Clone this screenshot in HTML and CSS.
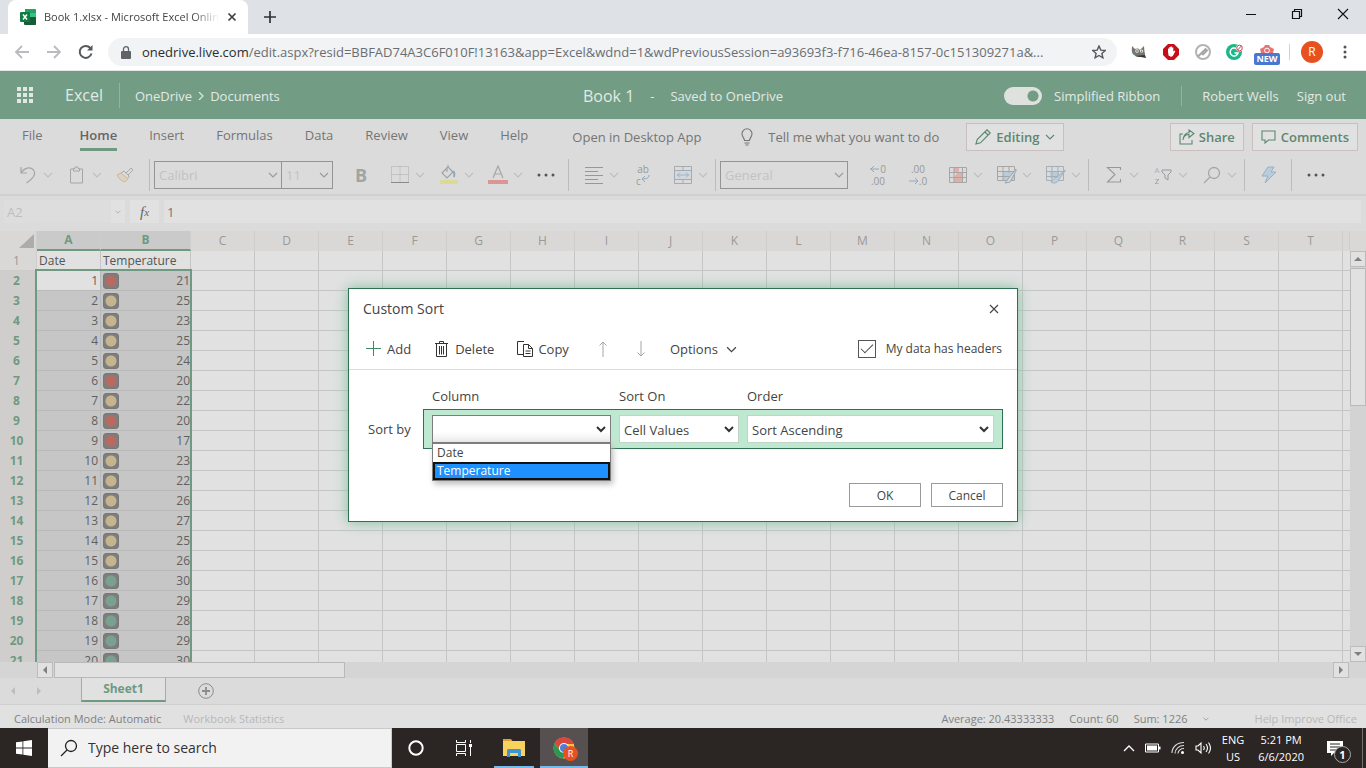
FILE: index.html
```html
<!DOCTYPE html>
<html lang="en">
<head>
<meta charset="utf-8">
<title>Book 1.xlsx - Microsoft Excel Online</title>
<link rel="stylesheet" href="styles.css">
</head>
<body>
<svg class="sprite" aria-hidden="true">
  <symbol id="chev" viewBox="0 0 10 10"><path d="M1 3l4 4 4-4" fill="none" stroke="currentColor" stroke-width="1.1"/></symbol>
  <symbol id="chev-bold" viewBox="0 0 10 10"><path d="M1 3l4 4 4-4" fill="none" stroke="#333" stroke-width="2"/></symbol>
  <symbol id="lens" viewBox="0 0 18 18"><circle cx="11" cy="7" r="5.5" fill="none" stroke="currentColor" stroke-width="1.3"/><path d="M7 11L1 17" stroke="currentColor" stroke-width="1.3"/></symbol>
</svg>

<header class="tabstrip">
  <div class="tab">
    <svg width="16" height="16" viewBox="0 0 16 16"><path d="M5 0h10a1 1 0 0 1 1 1v14a1 1 0 0 1-1 1H5z" fill="#21a366"/><path d="M4 8h12v7a1 1 0 0 1-1 1H5a1 1 0 0 1-1-1z" fill="#185c37"/><path d="M4 4h6v8H4z" fill="#107c41"/><path d="M10 4h6v4h-6z" fill="#33c481"/><rect y="3" width="10" height="10" rx="1" fill="#107c41"/><path d="M3 5.500l4 5M7 5.500l-4 5" stroke="#fff" stroke-width="1.500"/></svg>
    <span class="tab-title">Book 1.xlsx - Microsoft Excel Online</span>
    <button class="plain" aria-label="Close tab"><svg width="10" height="10" viewBox="0 0 10 10"><path d="M1.500 1.500l7 7M8.500 1.500l-7 7" stroke="#3c4043" stroke-width="1.700"/></svg></button>
  </div>
  <button class="plain new-tab" aria-label="New tab"><svg width="12" height="12" viewBox="0 0 12 12"><path d="M6 0v12M0 6h12" stroke="#303336" stroke-width="1.700"/></svg></button>
  <div class="window-controls">
    <button class="plain" aria-label="Minimize"><svg width="12" height="12" viewBox="0 0 12 12"><path d="M1 6.500h10" stroke="#111"/></svg></button>
    <button class="plain" aria-label="Restore"><svg width="12" height="12" viewBox="0 0 12 12"><path d="M1.500 3.500h7v7h-7zM3.500 3.500v-2h7v7h-2" fill="none" stroke="#111" stroke-width="1.200"/></svg></button>
    <button class="plain" aria-label="Close window"><svg width="12" height="12" viewBox="0 0 12 12"><path d="M1 1l10 10M11 1L1 11" stroke="#111" stroke-width="1.100"/></svg></button>
  </div>
</header>

<div class="browser-bar">
  <button class="plain nav" aria-label="Back"><svg width="16" height="14" viewBox="0 0 16 14"><path d="M15 7H2M8 1L2 7l6 6" fill="none" stroke="#b9bbbe" stroke-width="1.800"/></svg></button>
  <button class="plain nav" aria-label="Forward"><svg width="16" height="14" viewBox="0 0 16 14"><path d="M1 7h13M8 1l6 6-6 6" fill="none" stroke="#b9bbbe" stroke-width="1.800"/></svg></button>
  <button class="plain nav" aria-label="Reload"><svg width="16" height="16" viewBox="0 0 16 16"><path d="M13.500 9.500A6 6 0 1 1 12.300 4" fill="none" stroke="#55585c" stroke-width="2"/><path d="M14.500 1v5.500H9z" fill="#55585c"/></svg></button>
  <div class="address">
    <svg width="10" height="13" viewBox="0 0 10 13"><rect y="5" width="10" height="8" rx="1" fill="#5f6368"/><path d="M2.500 5V3.200a2.500 2.500 0 0 1 5 0V5" fill="none" stroke="#5f6368" stroke-width="1.300"/></svg>
    <span class="url"><b>onedrive.live.com</b>/edit.aspx?resid=BBFAD74A3C6F010F!13163&amp;app=Excel&amp;wdnd=1&amp;wdPreviousSession=a93693f3-f716-46ea-8157-0c151309271a&amp;...</span>
    <button class="plain" aria-label="Bookmark"><svg width="14" height="14" viewBox="0 0 14 14"><path d="M7 1l1.800 4.100 4.400.4-3.300 2.900 1 4.400L7 10.500l-3.900 2.300 1-4.400L.8 5.500l4.400-.4z" fill="none" stroke="#55585c" stroke-width="1.400"/></svg></button>
  </div>
  <div class="extensions">
    <button class="plain ext" aria-label="Extension"><svg width="16" height="14" viewBox="0 0 16 14"><path d="M1 1l3 3c2-1 4-.5 5 1l4-4 .5 6c1 2 .5 3.500-.5 4-3 2-8 1-10-1C0 8 1 4 1 1z" fill="#77756f"/><circle cx="6" cy="6" r="1.700" fill="#fff"/><circle cx="10.500" cy="6" r="1.500" fill="#fff"/><circle cx="6" cy="6" r=".7"/><circle cx="10.500" cy="6" r=".6"/><path d="M4 11l10-1 1 3-5-1z" fill="#333"/><path d="M2 8l2 1-1 1z" fill="#48a6c8"/></svg></button>
    <button class="plain ext" aria-label="Ad blocker"><svg width="16" height="16" viewBox="0 0 16 16"><path d="M5 0h6l5 5v6l-5 5H5l-5-5V5z" fill="#c70d17"/><path d="M5 8V4.500h1.300V3h1.400V2.500h1.300V3.500h1.300v4l1.500-1 .5.800L9.800 12c-1 1-3.500 1-4.200-.5z" fill="#fff"/></svg></button>
    <button class="plain ext" aria-label="Link extension"><svg width="16" height="16" viewBox="0 0 16 16"><circle cx="8" cy="8" r="7" fill="none" stroke="#b3b3b3" stroke-width="2"/><path d="M3 12.500L10.500 5l1.500 1.500L8 10.500 6.500 9" stroke="#a5a5a5" stroke-width="1.900" fill="none"/></svg></button>
    <button class="plain ext" aria-label="Grammar extension"><svg width="18" height="16" viewBox="0 0 18 16"><circle cx="8" cy="8" r="8" fill="#18b888"/><path d="M10.500 4.800A4 4 0 1 0 12 9H8.500" fill="none" stroke="#fff" stroke-width="1.500"/><circle cx="13.500" cy="4" r="3.600" fill="#fff"/><circle cx="13.500" cy="4" r="2.800" fill="none" stroke="#c8485c"/><path d="M11.600 6l3.800-4" stroke="#c8485c"/></svg></button>
    <button class="plain ext stacked" aria-label="New extension"><svg width="16" height="8" viewBox="0 0 16 8"><path d="M1 4L5 2l1-2h4l1 2 4 2-1 4H2z" fill="#e57373"/><circle cx="8" cy="5.500" r="2.400" fill="none" stroke="#fff"/></svg><span class="new-badge">NEW</span></button>
    <span class="bar-line"></span>
    <button class="avatar" aria-label="Profile">R</button>
    <button class="plain menu-dots" aria-label="Menu"><svg width="4" height="14" viewBox="0 0 4 14" fill="#4f5256"><circle cx="2" cy="2" r="1.500"/><circle cx="2" cy="7" r="1.500"/><circle cx="2" cy="12" r="1.500"/></svg></button>
  </div>
</div>

<main class="app">
  <div class="suite">
    <button class="plain waffle" aria-label="App launcher"><svg width="16" height="16" viewBox="0 0 16 16" fill="#dfe8e2"><path d="M0 0h4v4H0zM6 0h4v4H6zM12 0h4v4h-4zM0 6h4v4H0zM6 6h4v4H6zM12 6h4v4h-4zM0 12h4v4H0zM6 12h4v4H6zM12 12h4v4h-4z"/></svg></button>
    <a class="brand" href="#">Excel</a>
    <nav class="crumbs"><a href="#">OneDrive</a><svg width="6" height="8" viewBox="0 0 6 8"><path d="M1 0l4 4-4 4" fill="none" stroke="#dfe8e2" stroke-width="1.200"/></svg><a href="#">Documents</a></nav>
    <div class="doc"><h1>Book 1</h1><span>-</span><span>Saved to OneDrive</span></div>
    <div class="account">
      <label class="simplified"><input type="checkbox" class="switch" checked>Simplified Ribbon</label>
      <a class="user" href="#">Robert Wells</a>
      <a href="#">Sign out</a>
    </div>
  </div>

  <div class="ribbon-tabs">
    <nav class="tabs">
      <a href="#" class="file">File</a><a href="#" class="active">Home</a><a href="#">Insert</a><a href="#">Formulas</a><a href="#">Data</a><a href="#">Review</a><a href="#">View</a><a href="#">Help</a>
    </nav>
    <a class="desktop" href="#">Open in Desktop App</a>
    <button class="plain tell"><svg width="12" height="18" viewBox="0 0 12 18"><path d="M3.500 12.500C3.500 10 1 9 1 5.800a5 5 0 0 1 10 0C11 9 8.500 10 8.500 12.500zM3.500 15h5M4.500 17h3" fill="none" stroke="#747474" stroke-width="1.100"/></svg>Tell me what you want to do</button>
    <button class="boxed editing"><svg width="16" height="16" viewBox="0 0 16 16"><path d="M1 15l1.200-4.500L12 .8l3.200 3.200-9.700 9.800zM10 3l3 3" fill="none" stroke="#5c8870" stroke-width="1.200"/></svg>Editing<svg width="10" height="10"><use href="#chev"/></svg></button>
    <div class="right-actions">
      <button class="boxed"><svg width="16" height="16" viewBox="0 0 16 16"><path d="M4 5H1v10h12v-4M4 11c.5-4 3-5.500 6-5.500V8.500L15 4.500 10 1v2.800C6 4 4.500 7 4 11z" fill="none" stroke="#5c8870" stroke-width="1.100"/></svg>Share</button>
      <button class="boxed"><svg width="16" height="14" viewBox="0 0 16 14"><path d="M1 1h13v9H7.500L4 13v-3H1z" fill="none" stroke="#5c8870" stroke-width="1.100"/></svg>Comments</button>
    </div>
  </div>

  <div class="tools">
    <div class="group first">
      <button class="tool split" aria-label="Undo"><span><svg width="18" height="20" viewBox="0 0 18 20"><path d="M2 2v6h6M2 8C5 3 11 1 14.500 5c3 4-.5 9-7 13" fill="none" stroke="#999" stroke-width="1.200"/></svg></span><svg width="10" height="10"><use href="#chev"/></svg></button>
      <button class="tool split" aria-label="Paste"><span><svg width="16" height="18" viewBox="0 0 16 18"><path d="M4.500 3H1.500v14h12V3h-3M4.500 5V2.500h1.500V1h3v1.500h1.500V5z" fill="none" stroke="#999"/></svg></span><svg width="10" height="10"><use href="#chev"/></svg></button>
      <button class="tool" aria-label="Format painter"><svg width="18" height="16" viewBox="0 0 18 16"><path d="M1 8l4-2 7 6-3 3c-3-.5-6-3-8-7z" fill="#ddd2bd" stroke="#cdb994"/><path d="M5 6l3-2 5 5-1 2M10 6l5-5 2 2-5 5" fill="none" stroke="#aaa"/></svg></button>
    </div>
    <div class="group flush">
      <div class="combo font"><select aria-label="Font"><option>Calibri</option></select><svg width="10" height="10"><use href="#chev"/></svg></div>
      <div class="combo size"><select aria-label="Font size"><option>11</option></select><svg width="10" height="10"><use href="#chev"/></svg></div>
      <button class="tool bold">B</button>
      <button class="tool split" aria-label="Borders"><span><svg width="18" height="18" viewBox="0 0 18 18"><path d="M.5 .5h17v16H.5zM9 .5v16M.5 8.500h17" fill="none" stroke="#a0a0a0" stroke-dasharray="1 1"/><path d="M0 16.500h18" stroke="#777"/></svg></span><svg width="10" height="10"><use href="#chev"/></svg></button>
      <button class="tool split" aria-label="Fill color"><span><svg width="20" height="20" viewBox="0 0 20 20"><path d="M9 2L3 8l5 5 6-6-5-5V0M8 2v5" fill="none" stroke="#8b959c" stroke-width="1.100"/><path d="M13 7c2-1 3 1 2 5" fill="none" stroke="#7f9bb0" stroke-width="2"/><path d="M1 15h18v4H1z" fill="#dbdb85"/></svg></span><svg width="10" height="10"><use href="#chev"/></svg></button>
      <button class="tool split" aria-label="Font color"><span><svg width="20" height="20" viewBox="0 0 20 20"><path d="M5 13L10 1l5 12M7 9h6" fill="none" stroke="#999" stroke-width="1.200"/><path d="M0 15h20v4H0z" fill="#db8583"/></svg></span><svg width="10" height="10"><use href="#chev"/></svg></button>
      <button class="tool" aria-label="More font options"><svg width="18" height="4" viewBox="0 0 18 4" fill="#555"><circle cx="2" cy="2" r="1.500"/><circle cx="9" cy="2" r="1.500"/><circle cx="16" cy="2" r="1.500"/></svg></button>
    </div>
    <div class="group">
      <button class="tool split" aria-label="Align"><span><svg width="18" height="18" viewBox="0 0 18 18"><path d="M0 1.500h18M0 5.500h13M0 9.500h18M0 13.500h13M0 17.500h18" stroke="#888"/></svg></span><svg width="10" height="10"><use href="#chev"/></svg></button>
      <button class="tool wrap" aria-label="Wrap text"><span>ab</span><span>c<svg width="9" height="8" viewBox="0 0 9 8"><path d="M8 0c0 3-2 4-7 4M4 1L1 4l3 3" fill="none" stroke="#91a9bd"/></svg></span></button>
      <button class="tool split" aria-label="Merge"><span><svg width="18" height="18" viewBox="0 0 18 18"><path d="M1 5h16v8H1z" fill="#cfd9e1"/><path d="M.5 .5h17v17H.5zM.5 4.500h17M.5 13.500h17M9 0v4M9 14v4" fill="none" stroke="#9aa0a5"/><path d="M3 9h12M6 6.500L3.500 9 6 11.500M12 6.500L14.500 9 12 11.500" fill="none" stroke="#8faac1"/></svg></span><svg width="10" height="10"><use href="#chev"/></svg></button>
    </div>
    <div class="group flush">
      <div class="combo number"><select aria-label="Number format"><option>General</option></select><svg width="10" height="10"><use href="#chev"/></svg></div>
      <button class="tool decimals" aria-label="Increase decimal"><span><svg width="10" height="10" viewBox="0 0 10 10"><path d="M0 6h9M4 3L1 6l3 3" fill="none" stroke="#91a9bd"/></svg>0</span><span>.00</span></button>
      <button class="tool decimals" aria-label="Decrease decimal"><span>.00</span><span><svg width="10" height="10" viewBox="0 0 10 10"><path d="M0 6h9M6 3l3 3-3 3" fill="none" stroke="#91a9bd"/></svg>.0</span></button>
      <button class="tool split" aria-label="Conditional formatting"><span><svg width="18" height="16" viewBox="0 0 18 16"><path d="M5 0h5v5H5zM9 5h4v5H5zM5 10h9v5H5z" fill="#dfa6a0"/><path d="M.5 .5h17v15H.5zM.5 5.500h17M.5 10.500h17M5 .5v15M13.500 .5v15" fill="none" stroke="#999"/></svg></span><svg width="10" height="10"><use href="#chev"/></svg></button>
      <button class="tool split" aria-label="Format as table"><span><svg width="20" height="18" viewBox="0 0 20 18"><path d="M6 5h12v9H6z" fill="#b5c8d8"/><path d="M.5 .5h17v14H.5zM.5 5.500h17M.5 10.500h12M6 .5v14M12 .5v6" fill="none" stroke="#999"/><path d="M19 3l-8 10-3 4 5-1 6-11z" fill="#d3dbe2" stroke="#8699a8"/></svg></span><svg width="10" height="10"><use href="#chev"/></svg></button>
      <button class="tool split" aria-label="Cell styles"><span><svg width="20" height="18" viewBox="0 0 20 18"><path d="M4 6h9v6H4z" fill="#b5c8d8"/><path d="M.5 .5h17v14H.5zM.5 5.500h17M.5 10.500h12M6 .5v14M12 .5v10" fill="none" stroke="#9aa5ad"/><path d="M19 4l-8 7c-3 0-4 3-6 5 3 2 7 1 8-3l6-8z" fill="#b5cbdd" stroke="#8aa6bb"/></svg></span><svg width="10" height="10"><use href="#chev"/></svg></button>
    </div>
    <div class="group">
      <button class="tool split" aria-label="AutoSum"><span><svg width="16" height="18" viewBox="0 0 16 18"><path d="M14.500 4V1.500H1.500L9 8.500 1.500 16h13v-3" fill="none" stroke="#888" stroke-width="1.100"/></svg></span><svg width="10" height="10"><use href="#chev"/></svg></button>
      <button class="tool split" aria-label="Sort and filter"><span class="az"><i>A<b>Z</b></i><svg width="11" height="12" viewBox="0 0 11 12"><path d="M1 1h9v2L7 6v5L4 9V6L1 3z" fill="none" stroke="#888"/></svg></span><svg width="10" height="10"><use href="#chev"/></svg></button>
      <button class="tool split" aria-label="Find"><span><svg width="18" height="18"><use href="#lens"/></svg></span><svg width="10" height="10"><use href="#chev"/></svg></button>
    </div>
    <div class="group"><button class="tool" aria-label="Ideas"><svg width="16" height="18" viewBox="0 0 16 18"><path d="M7 1h6l-3 5h5L4 17l3-7H1z" fill="#b9cedd" stroke="#95b0c5"/></svg></button></div>
    <div class="group"><button class="tool" aria-label="More commands"><svg width="18" height="4" viewBox="0 0 18 4" fill="#555"><circle cx="2" cy="2" r="1.500"/><circle cx="9" cy="2" r="1.500"/><circle cx="16" cy="2" r="1.500"/></svg></button></div>
  </div>

  <div class="formula-bar">
    <input class="name-box" aria-label="Name box" value="A2">
    <button class="plain name-drop" aria-label="Names"><svg width="6" height="6"><use href="#chev"/></svg></button>
    <button class="plain fx" aria-label="Insert function">f<sub>x</sub></button>
    <input class="formula" aria-label="Formula" value="1">
  </div>

  <div class="sheet">
    <div class="grid">
      <table>
        <colgroup><col class="c-row"><col class="c-std"><col class="c-b"><col class="c-std" span="18"><col class="c-rest"></colgroup>
        <thead><tr><th class="corner"><svg width="16" height="16" viewBox="0 0 16 16"><path d="M16 1v14H1z" fill="#acacac"/></svg></th><th class="on">A</th><th class="on">B</th><th>C</th><th>D</th><th>E</th><th>F</th><th>G</th><th>H</th><th>I</th><th>J</th><th>K</th><th>L</th><th>M</th><th>N</th><th>O</th><th>P</th><th>Q</th><th>R</th><th>S</th><th>T</th><th></th></tr></thead>
        <tbody>
          <tr class="titles"><th>1</th><td>Date</td><td>Temperature</td><td class="blank" colspan="19"></td></tr>
          <tr class="sel active"><th>2</th><td>1</td><td><i class="light red"></i>21</td><td class="blank" colspan="19"></td></tr>
          <tr class="sel"><th>3</th><td>2</td><td><i class="light yellow"></i>25</td><td class="blank" colspan="19"></td></tr>
          <tr class="sel"><th>4</th><td>3</td><td><i class="light yellow"></i>23</td><td class="blank" colspan="19"></td></tr>
          <tr class="sel"><th>5</th><td>4</td><td><i class="light yellow"></i>25</td><td class="blank" colspan="19"></td></tr>
          <tr class="sel"><th>6</th><td>5</td><td><i class="light yellow"></i>24</td><td class="blank" colspan="19"></td></tr>
          <tr class="sel"><th>7</th><td>6</td><td><i class="light red"></i>20</td><td class="blank" colspan="19"></td></tr>
          <tr class="sel"><th>8</th><td>7</td><td><i class="light yellow"></i>22</td><td class="blank" colspan="19"></td></tr>
          <tr class="sel"><th>9</th><td>8</td><td><i class="light red"></i>20</td><td class="blank" colspan="19"></td></tr>
          <tr class="sel"><th>10</th><td>9</td><td><i class="light red"></i>17</td><td class="blank" colspan="19"></td></tr>
          <tr class="sel"><th>11</th><td>10</td><td><i class="light yellow"></i>23</td><td class="blank" colspan="19"></td></tr>
          <tr class="sel"><th>12</th><td>11</td><td><i class="light yellow"></i>22</td><td class="blank" colspan="19"></td></tr>
          <tr class="sel"><th>13</th><td>12</td><td><i class="light yellow"></i>26</td><td class="blank" colspan="19"></td></tr>
          <tr class="sel"><th>14</th><td>13</td><td><i class="light yellow"></i>27</td><td class="blank" colspan="19"></td></tr>
          <tr class="sel"><th>15</th><td>14</td><td><i class="light yellow"></i>25</td><td class="blank" colspan="19"></td></tr>
          <tr class="sel"><th>16</th><td>15</td><td><i class="light yellow"></i>26</td><td class="blank" colspan="19"></td></tr>
          <tr class="sel"><th>17</th><td>16</td><td><i class="light green"></i>30</td><td class="blank" colspan="19"></td></tr>
          <tr class="sel"><th>18</th><td>17</td><td><i class="light green"></i>29</td><td class="blank" colspan="19"></td></tr>
          <tr class="sel"><th>19</th><td>18</td><td><i class="light green"></i>28</td><td class="blank" colspan="19"></td></tr>
          <tr class="sel"><th>20</th><td>19</td><td><i class="light green"></i>29</td><td class="blank" colspan="19"></td></tr>
          <tr class="sel"><th>21</th><td>20</td><td><i class="light green"></i>30</td><td class="blank" colspan="19"></td></tr>
        </tbody>
      </table>
      <div class="selection"></div>
    </div>
    <div class="vscroll">
      <button class="sb" aria-label="Scroll up"><svg width="8" height="4" viewBox="0 0 8 4"><path d="M0 4l4-4 4 4z"/></svg></button>
      <div class="thumb"></div>
      <button class="sb down" aria-label="Scroll down"><svg width="8" height="4" viewBox="0 0 8 4"><path d="M0 0l4 4 4-4z"/></svg></button>
    </div>
  </div>
  <div class="hscroll">
    <button class="sb" aria-label="Scroll left"><svg width="4" height="8" viewBox="0 0 4 8"><path d="M4 0L0 4l4 4z"/></svg></button>
    <div class="thumb"></div>
    <button class="sb right" aria-label="Scroll right"><svg width="4" height="8" viewBox="0 0 4 8"><path d="M0 0l4 4-4 4z"/></svg></button>
  </div>

  <div class="sheet-tabs">
    <button class="plain step" aria-label="Previous sheet"><svg width="4" height="8" viewBox="0 0 4 8"><path d="M4 0L0 4l4 4z" fill="#bdbdbd"/></svg></button>
    <button class="plain step" aria-label="Next sheet"><svg width="4" height="8" viewBox="0 0 4 8"><path d="M0 0l4 4-4 4z" fill="#bdbdbd"/></svg></button>
    <button class="sheet-tab">Sheet1</button>
    <button class="plain" aria-label="New sheet"><svg width="16" height="16" viewBox="0 0 16 16"><circle cx="8" cy="8" r="7.300" fill="none" stroke="#8c8c8c"/><path d="M8 4v8M4 8h8" stroke="#8c8c8c" stroke-width="1.800"/></svg></button>
  </div>

  <footer class="status">
    <span>Calculation Mode: Automatic</span><span class="dim">Workbook Statistics</span>
    <span class="stats"><span>Average: 20.43333333</span><span>Count: 60</span><span>Sum: 1226</span><svg width="6" height="6"><use href="#chev"/></svg></span>
    <span class="dim">Help Improve Office</span>
  </footer>

  <div class="overlay">
    <section class="dialog" role="dialog" aria-labelledby="dlg-title">
      <div class="dialog-head"><h2 id="dlg-title">Custom Sort</h2><button class="plain" aria-label="Close"><svg width="10" height="10" viewBox="0 0 10 10"><path d="M1 1l8 8M9 1L1 9" stroke="#444" stroke-width="1.100"/></svg></button></div>
      <div class="dialog-tools">
        <button class="plain add"><svg width="16" height="16" viewBox="0 0 16 16"><path d="M7.500 0v15M0 7.500h15" stroke="#3c8a67"/></svg>Add</button>
        <button class="plain del"><svg width="14" height="16" viewBox="0 0 14 16"><path d="M0 2.500h13M4.500 2V.5h4V2M1.500 3v12.500h10V3M4.500 5v8.500M6.500 5v8.500M8.500 5v8.500" fill="none" stroke="#333"/></svg>Delete</button>
        <button class="plain copy"><svg width="17" height="16" viewBox="0 0 17 16"><path d="M7 .5H.5v13H6M6.500 3.500h5l4 4v8h-9zM11.500 3.500v4h4M8.500 10h5M8.500 12.500h5" fill="none" stroke="#333"/></svg>Copy</button>
        <button class="plain move" aria-label="Move up"><svg width="8" height="16" viewBox="0 0 8 16"><path d="M4 16V1M.5 4.500L4 1l3.500 3.500" fill="none" stroke="#a6a6a6"/></svg></button>
        <button class="plain move" aria-label="Move down"><svg width="8" height="16" viewBox="0 0 8 16"><path d="M4 0v15M.5 11.500L4 15l3.500-3.500" fill="none" stroke="#a6a6a6"/></svg></button>
        <button class="plain options">Options<svg width="11" height="11"><use href="#chev"/></svg></button>
        <label class="headers"><input type="checkbox" checked>My data has headers</label>
      </div>
      <div class="sort-form">
        <div class="labels"><label for="s-col">Column</label><label for="s-on">Sort On</label><label for="s-order">Order</label></div>
        <span>Sort by</span>
        <div class="level">
          <div class="pick open"><select id="s-col"><option></option><option>Date</option><option>Temperature</option></select><svg width="10" height="10"><use href="#chev-bold"/></svg>
            <ul class="list" role="listbox"><li role="option">Date</li><li role="option" class="hot" aria-selected="true">Temperature</li></ul>
          </div>
          <div class="pick"><select id="s-on"><option>Cell Values</option></select><svg width="10" height="10"><use href="#chev-bold"/></svg></div>
          <div class="pick"><select id="s-order"><option>Sort Ascending</option></select><svg width="10" height="10"><use href="#chev-bold"/></svg></div>
        </div>
      </div>
      <div class="dialog-actions"><button>OK</button><button>Cancel</button></div>
    </section>
  </div>
</main>

<div class="taskbar">
  <button class="plain start" aria-label="Start"><svg width="16" height="16" viewBox="0 0 16 16" fill="#fff"><path d="M0 2.300L6.500 1.400v6.200H0zM7.300 1.300L16 0v7.600H7.300zM0 8.400h6.500v6.200L0 13.700zM7.300 8.400H16V16l-8.700-1.300z"/></svg></button>
  <label class="search"><svg width="18" height="18"><use href="#lens"/></svg><input type="text" placeholder="Type here to search"></label>
  <button class="plain slot" aria-label="Cortana"><svg width="16" height="16" viewBox="0 0 16 16"><circle cx="8" cy="8" r="6.700" fill="none" stroke="#fff" stroke-width="2"/></svg></button>
  <button class="plain slot" aria-label="Task view"><svg width="18" height="16" viewBox="0 0 18 16"><path d="M1.500 0v2.500h9V0M1.500 4.500h9v7h-9zM1.500 16v-2.500h9V16M15.500 0v3M15.500 7v9" fill="none" stroke="#fff"/><path d="M14 4h3v3h-3z" fill="#fff"/></svg></button>
  <button class="plain slot running" aria-label="File Explorer"><svg width="22" height="18" viewBox="0 0 22 18"><path d="M0 0h8l1.500 2H0z" fill="#e0a030"/><path d="M0 2h22v15H0z" fill="#f7d25f"/><path d="M4 18v-7l1-1h12l1 1v7h-3v-4H7v4z" fill="#3f94cf"/></svg></button>
  <button class="plain slot current" aria-label="Chrome"><svg width="22" height="22" viewBox="0 0 22 22"><circle cx="11" cy="11" r="10.500" fill="#f6c644"/><path d="M1.500 6.500A10.500 10.500 0 0 1 21 7H11L8 14z" fill="#d8483e"/><path d="M1.500 6.500A10.500 10.500 0 0 0 10 21.500l4-7-6 0z" fill="#2f9552"/><circle cx="11" cy="11" r="5" fill="#fff"/><circle cx="11" cy="11" r="4" fill="#4a7fdb"/></svg><span class="r-badge">R</span></button>
  <div class="tray">
    <svg width="12" height="8" viewBox="0 0 12 8"><path d="M1 7l5-5 5 5" fill="none" stroke="#fff" stroke-width="1.300"/></svg>
    <svg width="16" height="10" viewBox="0 0 16 10"><path d="M.5 1h13v8H.5z" fill="none" stroke="#fff"/><path d="M2 2.500h10v5H2zM14 3.500h1.500v3H14z" fill="#fff"/></svg>
    <svg width="14" height="14" viewBox="0 0 14 14"><path d="M1 12C1 6 6 1.500 13 1.500M4 12.500C4 8 8 4.500 13 4.500M7 12.500c0-3 3-5 6-5" fill="none" stroke="#ddd" stroke-width="1.100"/><circle cx="11.500" cy="11.500" r="1.500" fill="#fff"/></svg>
    <svg width="17" height="14" viewBox="0 0 17 14"><path d="M1 5h2l3-3v10L3 9H1zM8.500 5q1.500 2 0 4M11 3q3 4 0 8M13.500 1.500q4 5.500 0 11" fill="none" stroke="#fff" stroke-width="1.100"/></svg>
    <span class="two lang">ENG<br>US</span>
    <span class="two clock">5:21 PM<br>6/6/2020</span>
    <span class="note"><svg width="17" height="16" viewBox="0 0 17 16"><path d="M0 0h16v12H7l-3 3v-3H0z" fill="#fff"/><path d="M3 3h10M3 6h10M3 9h6" stroke="#2b2625"/></svg><b>1</b></span>
  </div>
</div>
</body>
</html>
```
FILE: styles.css
```css
* { box-sizing: border-box; }
body {
  margin: 0;
  height: 100vh;
  display: flex;
  flex-direction: column;
  overflow: hidden;
  font: 13px/20px "Open Sans", "Noto Sans", sans-serif;
  color: #444;
}
button, input, select { font: inherit; color: inherit; }
button { cursor: pointer; }
a { color: inherit; text-decoration: none; }
svg { display: block; flex: none; }
h1, h2, ul { margin: 0; padding: 0; font-weight: 400; list-style: none; }
.sprite { position: absolute; width: 0; height: 0; }
.plain { border: 0; background: none; padding: 0; display: flex; align-items: center; justify-content: center; }

/* Browser frame */
.tabstrip { display: flex; height: 34px; background: #dee1e6; padding-left: 8px; }
.tab { display: flex; align-items: center; width: 240px; padding: 0 11px 0 12px; background: #fff; border-radius: 8px 8px 0 0; }
.tab-title {
  flex: 1; margin: 0 8px; overflow: hidden; white-space: nowrap; font-size: 11px;
  -webkit-mask-image: linear-gradient(90deg, #000 85%, transparent);
  mask-image: linear-gradient(90deg, #000 85%, transparent);
}
.new-tab { width: 44px; }
.window-controls { display: flex; margin-left: auto; padding-bottom: 6px; }
.window-controls button { width: 46px; }
.browser-bar { display: flex; align-items: center; height: 37px; padding-left: 6px; background: #fff; border-bottom: 1px solid #e3e6e4; }
.nav { width: 32px; height: 28px; }
.address { display: flex; align-items: center; flex: 1; min-width: 0; height: 28px; margin-left: 6px; padding: 0 11px 0 13px; border-radius: 14px; background: #f1f3f4; }
.url { flex: 1; min-width: 0; margin: 0 12px 0 11px; overflow: hidden; white-space: nowrap; color: #6a6e72; }
.url b { font-weight: 400; color: #2b2d30; }
.extensions { display: flex; align-items: center; margin-left: 6px; }
.ext { width: 32px; height: 28px; }
.stacked { flex-direction: column; padding-top: 6px; }
.new-badge { padding: 0 2px; border-radius: 2px; background: #4a78d0; color: #fff; font-size: 9px; line-height: 12px; font-weight: 700; }
.bar-line { width: 1px; height: 16px; margin: 0 11px 0 6px; background: #cfd1d4; }
.avatar { width: 22px; height: 22px; padding: 0; border: 0; border-radius: 50%; background: #e8511f; color: #fff; font-size: 12px; line-height: 22px; }
.menu-dots { width: 43px; height: 28px; }

/* Suite header */
.app { position: relative; flex: 1; min-height: 0; display: flex; flex-direction: column; background: #dbdbdb; }
.suite { display: flex; align-items: center; height: 48px; flex: none; background: #739c84; color: #e1eae4; position: relative; }
.waffle { width: 50px; height: 48px; }
.brand { padding: 2px 16px 3px 15px; font-size: 16px; border-right: 1px solid #94b3a1; }
.crumbs { display: flex; align-items: center; gap: 6px; padding: 2px 0 0 15px; }
.doc { position: absolute; left: 50%; transform: translateX(-50%); display: flex; align-items: center; gap: 16px; padding-top: 2px; }
.doc h1 { font-size: 16px; }
.account { display: flex; align-items: center; margin-left: auto; padding: 2px 20px 0 0; gap: 18px; }
.simplified { display: flex; align-items: center; gap: 12px; padding-right: 3px; }
.switch { appearance: none; width: 38px; height: 18px; margin: 0; border-radius: 9px; background: radial-gradient(circle at 29px 9px, #739c84 5px, #dfe1df 6px); }
.user { border-left: 1px solid #94b3a1; padding-left: 20px; }

/* Ribbon */
.ribbon-tabs { display: flex; align-items: center; height: 36px; flex: none; padding-right: 8px; color: #757575; }
.tabs { display: flex; gap: 32px; padding-left: 22px; }
.tabs a { padding: 2px 0 3px; border-bottom: 3px solid transparent; }
.tabs .file { margin-right: 5px; }
.tabs .active { font-weight: 600; color: #666; border-color: #6f9a81; }
.desktop { margin-left: 44px; }
.tell { gap: 15px; margin-left: 40px; }
.boxed { display: flex; align-items: center; gap: 4px; height: 28px; padding: 0 8px; border: 1px solid #c9bfbf; background: #e1e1e1; color: #5c8870; font-weight: 600; }
.editing { gap: 5px; margin-left: 27px; }
.right-actions { display: flex; gap: 8px; margin-left: auto; }
.tools { display: flex; align-items: center; flex: none; height: 41px; border-bottom: 2px solid #d0d0d0; color: #999; }
.group { display: flex; align-items: center; gap: 8px; height: 32px; padding: 0 7px 0 9px; border-left: 1px solid #bcbcbc; }
.group.first { border: 0; padding: 0 9px 0 12px; }
.group.flush { padding-left: 4px; }
.tool { display: flex; align-items: center; justify-content: center; width: 30px; height: 28px; padding: 0; border: 0; background: none; }
.tool.split { width: 41px; }
.split > span { display: flex; align-items: center; justify-content: center; width: 30px; opacity: .8; }
.split > svg { color: #bfbfbf; }
.bold { font-size: 18px; font-weight: 700; color: #a3a3a3; }
.combo { display: grid; align-items: center; height: 28px; border: 1px solid #949494; color: #c2c2c2; }
.combo > * { grid-area: 1 / 1; }
.combo select { appearance: none; height: 26px; padding: 0 4px; border: 0; background: none; }
.combo svg { justify-self: end; margin-right: 3px; color: #999; }
.font { width: 128px; }
.size { width: 52px; margin: 0 5px 0 -9px; }
.number { width: 128px; margin-right: 6px; }
.wrap, .decimals { flex-direction: column; font-size: 10px; line-height: 12px; }
.wrap span, .decimals span { display: flex; height: 12px; }
.tool.wrap, .tool.decimals { width: 32px; }
.az i { font-style: normal; font-size: 8px; line-height: 11px; color: #91a9bd; width: 8px; }
.az b { display: block; font-weight: 400; color: #888; }

/* Formula bar */
.formula-bar { display: flex; flex: none; height: 23px; margin: 4px 5px 8px 4px; }
.formula-bar > * { height: 23px; background: #e1e1e1; }
.name-box { width: 107px; border: 0; padding: 0 3px; color: #bdbdbd; }
.formula-bar .name-box { background: #dddddd; }
.name-drop { width: 14px; color: #999; }
.fx { width: 29px; margin: 0 5px; font: italic 400 15px/20px "Liberation Serif", serif; color: #666; }
.fx sub { font-size: 11px; }
.formula { flex: 1; min-width: 0; border: 0; padding: 0 3px; color: #777; }

/* Worksheet */
.sheet { display: flex; flex: 1; min-height: 0; }
.grid { position: relative; flex: 1; min-width: 0; overflow: hidden; background: #e1e1e1; }
table { table-layout: fixed; border-collapse: separate; border-spacing: 0; width: 100%; }
.c-row { width: 37px; }
.c-std { width: 64px; }
.c-b { width: 90px; }
th, td { height: 20px; padding: 0; line-height: 18px; overflow: hidden; border-right: 1px solid #c5c5c5; border-bottom: 1px solid #c5c5c5; font-size: 12px; }
th { font-weight: 400; color: #999; background: #dad8d7; border-color: #cfcdcc; }
thead th { border-bottom-color: #dad8d7; }
thead .on { background: #cbcaca; color: #6f9a81; font-weight: 700; border-bottom: 2px solid #6f9a81; }
.corner { padding-left: 18px; }
tbody th { padding-right: 3px; }
.titles td { padding-left: 2px; color: #555; font-weight: 500; }
.sel th { background: #cfcecd; color: #6f9a81; font-weight: 700; }
.sel td { background: #c6c6c6; text-align: right; padding-right: 2px; color: #616161; border-color: #b9b9b9; }
.active td:nth-child(2) { background: #e1e1e1; }
.sel td:nth-child(3) { padding-right: 0; }
tr td.blank { background: repeating-linear-gradient(90deg, transparent 0 63px, #c5c5c5 63px 64px); border-right: 0; border-color: #c5c5c5; }
.light { float: left; width: 16px; height: 16px; margin: 1px 0 0 2px; border-radius: 3px; border: 1px solid #777; }
.red { background: radial-gradient(circle, #b9695f 5px, #7d7d7d 6px); }
.yellow { background: radial-gradient(circle, #c5b48e 5px, #7d7d7d 6px); }
.green { background: radial-gradient(circle, #7aa090 5px, #7d7d7d 6px); }
.selection { position: absolute; left: 35px; top: 38px; bottom: -4px; width: 157px; border: 2px solid #6f9a81; }
.vscroll { display: flex; flex-direction: column; width: 16px; border-top: 20px solid #dad8d7; background: #d3d3d3; }
.sb { display: flex; align-items: center; justify-content: center; width: 16px; height: 16px; flex: none; padding: 0; border: 1px solid #bcbcbc; background: #e1e1e1; fill: #808080; }
.thumb { border: 1px solid #b9b9b9; background: #e1e1e1; }
.vscroll .thumb { height: 138px; margin-top: 1px; }
.down { margin-top: auto; }
.hscroll { display: flex; flex: none; height: 16px; padding: 0 17px 0 37px; background: #d5d5d5; }
.hscroll .thumb { width: 291px; margin-left: 1px; }
.right { margin-left: auto; }
.sheet-tabs { display: flex; align-items: center; flex: none; height: 27px; border-bottom: 1px solid #cfcfcf; }
.step { width: 26px; }
.sheet-tab { align-self: flex-start; width: 85px; height: 24px; margin: 0 32px 0 29px; border: 1px solid #a9a9a9; border-width: 0 1px 2px; border-bottom-color: #6f9a81; background: #e1e1e1; padding: 0; font-size: 12px; font-weight: 700; line-height: 20px; color: #6f9a81; }
.status { display: flex; flex: none; align-items: center; gap: 22px; height: 23px; padding: 4px 9px 0 14px; background: #e1e1e1; font-size: 11px; line-height: 19px; color: #808080; }
.dim { color: #b8b8b8; }
.stats { display: flex; align-items: center; gap: 15px; margin: 0 24px 0 auto; }

/* Dialog */
.overlay { position: absolute; inset: 0; display: grid; place-items: center; padding-top: 11px; }
.dialog { width: 670px; background: #fff; border: 1px solid #2f6f52; box-shadow: 0 0 12px #7fbf9f; }
.dialog-head { display: flex; justify-content: space-between; padding: 10px 18px 10px 14px; }
.dialog-head h2 { font-size: 14px; }
.dialog-tools { display: flex; align-items: center; height: 41px; padding: 0 15px 0 17px; border-bottom: 1px solid #dcdcdc; }
.dialog-tools button { gap: 6px; }
.dialog-tools .add { gap: 5px; }
.dialog-tools .copy { gap: 4px; }
.dialog-tools .options { gap: 8px; }
.del { margin-left: 24px; }
.copy { margin-left: 23px; }
.move { width: 38px; }
.copy + .move { margin-left: 15px; }
.options { margin-left: 10px; }
.headers { display: flex; align-items: center; gap: 10px; margin-left: auto; font-size: 12px; }
.headers input {
  appearance: none; display: grid; width: 18px; height: 18px; margin: 0; border: 1px solid #555; place-items: center;
}
.headers input::after { content: ""; width: 11px; height: 5px; margin-bottom: 4px; border: solid #444; border-width: 0 0 1px 1px; rotate: -45deg; }
.sort-form { display: grid; grid-template-columns: 55px 1fr; align-items: center; row-gap: 3px; padding: 16px 14px 0 19px; }
.labels, .level { display: grid; grid-template-columns: 179px 120px 1fr; gap: 8px; padding: 0 8px; }
.labels { grid-column: 2; padding: 0 9px; }
.level { padding: 5px 8px; border: 1px solid #2f6f52; background: #bfe8d0; }
.pick { position: relative; display: grid; align-items: center; background: #fff; border: 1px solid #c0d4c8; }
.pick > select, .pick > svg { grid-area: 1 / 1; }
.pick select { appearance: none; width: 100%; height: 26px; padding: 1px 4px 0; border: 0; background: none; }
.pick > svg { justify-self: end; margin-right: 4px; pointer-events: none; }
.pick.open { border-color: #7d7d7d; background: linear-gradient(#fff 60%, #ececec); }
.list { position: absolute; z-index: 1; left: -1px; right: -1px; top: 100%; border: 1px solid #7d7d7d; border-top-width: 2px; background: #fff; box-shadow: 2px 3px 6px #bbb; font-size: 12px; }
.list li { padding: 0 4px; line-height: 18px; }
.list .hot { padding: 0 2px; line-height: 14px; border: 2px solid #111; background: #1e90ff; color: #fff; }
.dialog-actions { display: flex; justify-content: flex-end; gap: 10px; padding: 34px 14px 14px; }
.dialog-actions button { width: 72px; height: 24px; padding: 1px 0 0; border: 1px solid #9b9b9b; background: #fff; font-size: 12px; }

/* Taskbar */
.taskbar { display: flex; flex: none; height: 40px; background: #2b2524; color: #fff; }
.start { width: 48px; }
.search { display: flex; align-items: center; gap: 10px; width: 344px; padding-left: 12px; background: #f2f2f2; border: 1px solid #c9c9c9; border-left: 0; color: #222; }
.search input { flex: 1; min-width: 0; border: 0; background: none; font-size: 14px; padding: 0; }
.search input::placeholder { color: #333; }
.slot { position: relative; width: 48px; }
.running { width: 52px; background: linear-gradient(#76b9ed, #76b9ed) 50% 100% / 40px 2px no-repeat; }
.current { border-bottom: 2px solid #76b9ed; padding-top: 2px; background: #565150; }
.r-badge { position: absolute; left: 23px; top: 18px; width: 15px; height: 15px; border-radius: 50%; background: #e8511f; font-size: 9px; line-height: 15px; }
.tray { display: flex; align-items: center; gap: 10px; margin-left: auto; padding-right: 3px; }
.two { font-size: 11px; line-height: 17px; text-align: center; }
.clock { margin: 0 11px 0 4px; }
.note { position: relative; width: 38px; height: 40px; padding: 13px 0 0 2px; border-right: 1px solid #77706e; }
.note b { position: absolute; left: 9px; top: 18px; width: 17px; height: 17px; border: 1px solid #aaa; border-radius: 50%; background: #2b2524; font-size: 11px; line-height: 15px; text-align: center; }
```
